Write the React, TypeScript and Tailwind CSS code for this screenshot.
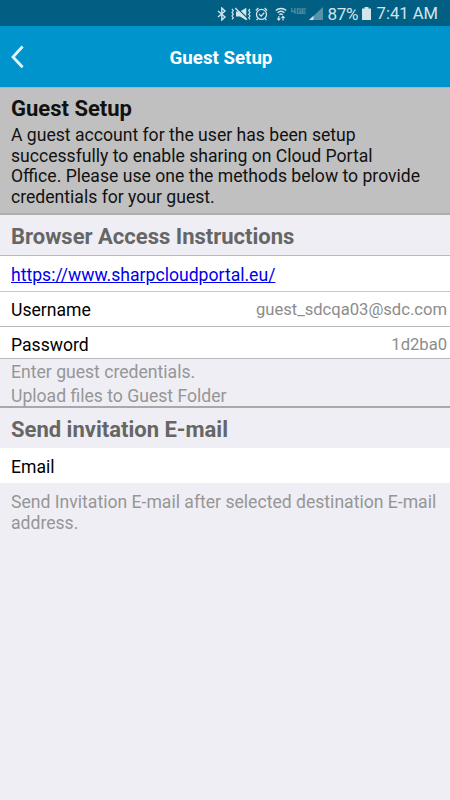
import React from 'react';

interface RowProps {
  label: string;
  value?: string;
  className?: string;
}

const BluetoothIcon = () => (
  <svg width="10" height="14" viewBox="0 0 10 14" fill="none" stroke="currentColor" strokeWidth="1.4">
    <path d="M1 4l7 6-3.2 3V1L8 4 1 10" />
  </svg>
);

const VibrateIcon = () => (
  <svg width="20" height="14" viewBox="0 0 20 14" fill="none" stroke="currentColor" strokeWidth="1.2">
    <path d="M1 2l1.3 1.6L1 5.4l1.3 1.8L1 9l1.3 1.7L1 12.3M19 2l-1.3 1.6L19 5.4l-1.3 1.8L19 9l-1.3 1.7L19 12.3" />
    <path d="M5 4.5h4l6.3-3.7v12.4L9 9.5H5z" fill="currentColor" stroke="none" />
    <path d="M5 .2l12 11.6" stroke="#005f82" strokeWidth="1.2" />
    <path d="M4.2 1l11.8 11.8" strokeWidth="1.3" />
  </svg>
);

const AlarmIcon = () => (
  <svg width="13" height="14" viewBox="0 0 13 14" fill="none" stroke="currentColor" strokeWidth="1.3">
    <circle cx="6.5" cy="7.4" r="5" />
    <path d="M.8 3.4l2.6-2.3M12.2 3.4L9.6 1.1M2.8 11.6l-1.2 1.5M10.2 11.6l1.2 1.5M4.2 7.2l2 1.9 3-3.3" />
  </svg>
);

const WifiIcon = () => (
  <svg width="12" height="14" viewBox="0 0 12 14" fill="none" stroke="currentColor" strokeWidth="1.5">
    <path d="M.8 3.5c3-2.8 7.4-2.8 10.4 0M2.6 5.7c2-1.8 4.8-1.8 6.8 0M4.3 7.8c1-.9 2.4-.9 3.4 0" />
    <path d="M3.8 9v4M2.2 11.4l1.6 1.7 1.5-1.7M8 13.5V9.3M6.5 11L8 9.3l1.6 1.7" strokeWidth="1.1" />
  </svg>
);

const NetworkIcon = () => (
  <svg width="15" height="7" viewBox="0 0 15 7" fill="none" stroke="currentColor" strokeWidth="1.4">
    <path d="M.7 0v3.5h4.2M3.9 0v6M10 1H6.4v4.2H9.6V3.2H8M14.8 1h-3.6v4.2h3.6M11.2 3.1h3.4" />
  </svg>
);

const SignalIcon = () => (
  <svg width="14" height="13" viewBox="0 0 14 13" fill="currentColor">
    <path d="M0 13L14 0v13z" className="text-[#5792a9]" />
    <path d="M0 13l4.5-4.2V13z" />
  </svg>
);

const BatteryIcon = () => (
  <svg width="9" height="13" viewBox="0 0 9 13" fill="currentColor">
    <path d="M2.5 0h4v1.5H9V13H0V1.5h2.5z" />
  </svg>
);

const StatusBar = () => (
  <div className="flex h-[26px] items-center bg-[#005f82] pt-px pr-[12px] text-[#d3e4eb]">
    <div className="ml-auto flex items-center">
      <BluetoothIcon />
      <span className="ml-[4px]"><VibrateIcon /></span>
      <span className="ml-[4px]"><AlarmIcon /></span>
      <span className="ml-[7px]"><WifiIcon /></span>
      <span className="mb-[5px] ml-[4px] text-[#4c88a0]"><NetworkIcon /></span>
      <span className="ml-[3px]"><SignalIcon /></span>
    </div>
    <span className="ml-[5px] w-[31px] text-[17px] leading-[26px] tracking-[-0.3px]">87%</span>
    <span className="ml-[3px]"><BatteryIcon /></span>
    <span className="ml-[6px] pt-px text-[16.6px] leading-[26px]">7:41 AM</span>
  </div>
);

const Header = () => (
  <div className="relative flex h-[61px] items-center justify-center bg-[#0094cd] pt-[4px] pr-[8px]">
    <button aria-label="Back" className="absolute left-[11px] top-[19px] text-[#e3f4fb]">
      <svg width="14" height="24" viewBox="0 0 14 24" fill="none" stroke="currentColor" strokeWidth="2.8">
        <path d="M11.6 1.5L2 12l9.6 10.3" />
      </svg>
    </button>
    <h1 className="text-[18.7px] font-bold text-white">Guest Setup</h1>
  </div>
);

const Row = ({ label, value, className = '' }: RowProps) => (
  <div className={`flex items-center justify-between pl-[11px] pr-[3px] bg-white ${className}`}>
    <span className="text-black">{label}</span>
    {value && <span className="text-[16.6px] text-[#8c8c8c]">{value}</span>}
  </div>
);

export default function App() {
  return (
    <div className="h-[800px] w-[450px] overflow-hidden bg-[#efeef4] font-['Roboto',sans-serif] text-[17.6px] leading-[20.5px]">
      <StatusBar />
      <Header />

      <div className="h-[128px] border-t border-b-2 border-t-[#b2b2b4] border-b-[#adadaf] bg-[#c0c0c0] pt-[8px] pl-[11px] text-[#111]">
        <h2 className="text-[22px] leading-[26px] font-bold">Guest Setup</h2>
        <p className="pt-[3px]">
          A guest account for the user has been setup<br />
          successfully to enable sharing on Cloud Portal<br />
          Office. Please use one the methods below to provide<br />
          credentials for your guest.
        </p>
      </div>

      <h2 className="h-[41px] border-b border-[#b9b8bd] pl-[11px] text-[22px] leading-[43px] font-bold text-[#666]">
        Browser Access Instructions
      </h2>
      <div className="flex h-[36px] items-center border-b border-[#c8c7cc] bg-white pt-[3px] pl-[11px]">
        <a href="#" className="text-[#0000ee] underline">https://www.sharpcloudportal.eu/</a>
      </div>
      <Row label="Username" value="guest_sdcqa03@sdc.com" className="h-[35px] border-b border-[#b9b8bd] pt-[3px]" />
      <Row label="Password" value="1d2ba0" className="h-[32px] border-b border-[#b9b8bd] pt-[5px]" />

      <div className="h-[49px] border-b-2 border-[#a9a9ac] pt-px pl-[11px] leading-[24px] text-[#969696]">
        <p>Enter guest credentials.</p>
        <p>Upload files to Guest Folder</p>
      </div>

      <h2 className="h-[40px] pl-[11px] text-[22px] leading-[43px] font-bold text-[#666]">Send invitation E-mail</h2>
      <Row label="Email" className="h-[35px] pt-[3px]" />
      <p className="pt-[9px] pl-[11px] text-[#969696]">
        Send Invitation E-mail after selected destination E-mail<br />
        address.
      </p>
    </div>
  );
}
